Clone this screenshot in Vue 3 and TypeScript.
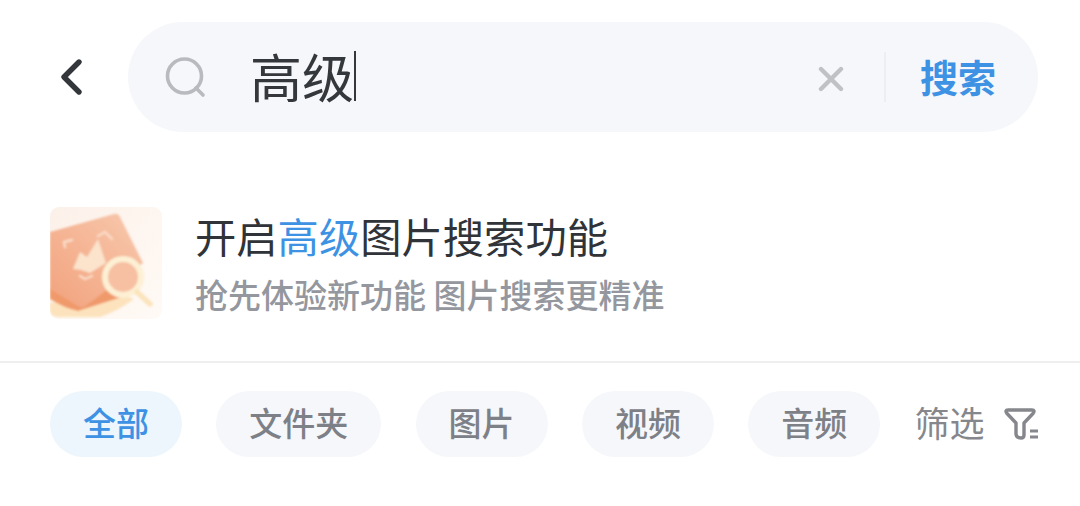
<script setup lang="ts">
const tabs = ['全部', '文件夹', '图片', '视频', '音频']
</script>

<template>
  <div class="page">
    <div class="top">
      <svg class="back" width="28" height="40" viewBox="0 0 28 40">
        <path d="M21 5 L6 20 L21 35" fill="none" stroke="#33363b" stroke-width="5.4" stroke-linecap="round" stroke-linejoin="round" />
      </svg>
      <div class="search">
        <svg class="lens" width="44" height="44" viewBox="0 0 44 44">
          <circle cx="20.5" cy="21" r="17" fill="none" stroke="#b8babf" stroke-width="3.6" />
          <path d="M32 33 L39 40" stroke="#b8babf" stroke-width="3.6" stroke-linecap="round" />
        </svg>
        <div class="query">高级<span class="caret"></span></div>
        <svg class="clear" width="26" height="26" viewBox="0 0 26 26">
          <path d="M3 3 L23 23 M23 3 L3 23" stroke="#c0c1c5" stroke-width="4.4" stroke-linecap="round" />
        </svg>
        <div class="sep"></div>
        <div class="go">搜索</div>
      </div>
    </div>

    <div class="promo">
      <svg class="thumb" width="112" height="112" viewBox="0 0 112 112">
        <defs>
          <linearGradient id="bg" x1="0" y1="0" x2="1" y2="1">
            <stop offset="0" stop-color="#fcf1e9" />
            <stop offset="1" stop-color="#fffaf6" />
          </linearGradient>
          <linearGradient id="card" x1="0" y1="1" x2="1" y2="0">
            <stop offset="0" stop-color="#f2a27d" />
            <stop offset="1" stop-color="#f8c9ae" />
          </linearGradient>
          <filter id="soft"><feGaussianBlur stdDeviation="0.9" /></filter>
        </defs>
        <rect width="112" height="112" rx="9" fill="url(#bg)" />
        <g filter="url(#soft)">
          <path d="M0 96 L0 103 Q0 110 9 110 L50 110 Q68 104 84 92 L60 84 Z" fill="#fce3bd" />
          <path d="M0 82 L0 92 Q14 101 28 104 L78 88 L70 76 Z" fill="#f09a6c" />
          <path d="M0 25 L64 7 Q68 6 70 10 L93 56 L34 100 Q31 101 28 99 L0 82 Z" fill="url(#card)" />
          <path d="M15 40 L14 35 L22 33 M48 29 L55 25 L62 32 M30 69 L35 72 L42 69" fill="none" stroke="#fbdcc8" stroke-width="2.4" stroke-linecap="round" stroke-linejoin="round" />
          <path d="M23 62 L30 45 L37 50 L48 32 L56 56 L40 66 L31 63 Z" fill="#fbe3cc" />
          <circle cx="73" cy="70" r="18" fill="#f7c0a3" stroke="#fdf0d4" stroke-width="6" />
          <path d="M87 85 L100 97" stroke="#fbe4bd" stroke-width="5.5" stroke-linecap="round" />
        </g>
      </svg>
      <div class="promo-text">
        <div class="title">开启<span class="hit">高级</span>图片搜索功能</div>
        <div class="sub">抢先体验新功能 图片搜索更精准</div>
      </div>
    </div>

    <div class="tabs">
      <div v-for="(t, i) in tabs" :key="t" class="tab" :class="{ on: i === 0 }">{{ t }}</div>
      <div class="filter">
        <span class="filter-label">筛选</span>
        <svg width="38" height="34" viewBox="0 0 38 34">
          <path d="M6 3 H30 Q33.5 3 31 6.5 L22 16 V28 Q22 31 19 31 Q14.5 31 14 27 V16 L5 6.5 Q2.5 3 6 3 Z" fill="none" stroke="#85878c" stroke-width="3.4" stroke-linejoin="round" />
          <path d="M28 24 H36 M28 30 H36" stroke="#85878c" stroke-width="3.2" />
        </svg>
      </div>
    </div>
  </div>
</template>

<style>
html, body {
  background: #fff;
}
</style>

<style scoped>
.page {
  width: 1080px;
  height: 506px;
  overflow: hidden;
  background: #fff;
  font-family: "Noto Sans CJK SC", "Noto Sans", sans-serif;
  display: flex;
  flex-direction: column;
}
.top {
  display: flex;
  align-items: center;
  padding: 22px 42px 0 58px;
}
.back {
  flex: none;
  margin-right: 42px;
}
.search {
  flex: 1;
  height: 110px;
  border-radius: 55px;
  background: #f5f7fa;
  display: flex;
  align-items: center;
  padding-left: 36px;
}
.lens {
  flex: none;
}
.query {
  flex: 1;
  margin-left: 42px;
  padding-bottom: 3px;
  display: flex;
  align-items: center;
  font-size: 52px;
  line-height: 60px;
  color: #34373b;
}
.caret {
  width: 2px;
  height: 50px;
  background: #34373b;
}
.clear {
  flex: none;
  margin-top: 3px;
}
.sep {
  width: 2px;
  height: 50px;
  margin: 0 34px 0 40px;
  background: #eceef1;
}
.go {
  flex: none;
  width: 118px;
  padding-bottom: 3px;
  font-size: 38px;
  font-weight: 700;
  color: #3e92e4;
}
.promo {
  display: flex;
  align-items: center;
  gap: 33px;
  margin-top: 75px;
  padding: 0 50px 42px;
  border-bottom: 2px solid #eeeeef;
}
.thumb {
  flex: none;
}
.promo-text {
  padding-bottom: 1px;
}
.title {
  font-size: 41.3px;
  line-height: 52px;
  color: #303338;
}
.hit {
  color: #3e92e4;
}
.sub {
  margin-top: 11px;
  font-size: 33px;
  line-height: 44px;
  font-weight: 500;
  color: #94979e;
}
.tabs {
  display: flex;
  align-items: center;
  gap: 34.3px;
  padding: 28px 0 0 50px;
}
.tab {
  height: 66px;
  padding: 0 33px;
  border-radius: 33px;
  background: #f5f7fa;
  color: #7d8087;
  font-size: 33px;
  font-weight: 500;
  line-height: 62px;
}
.tab.on {
  background: #edf6fd;
  color: #3e92e4;
}
.filter {
  display: flex;
  align-items: center;
  gap: 17px;
  font-size: 35px;
  color: #85878c;
}
.filter-label {
  padding-bottom: 6px;
}
</style>
